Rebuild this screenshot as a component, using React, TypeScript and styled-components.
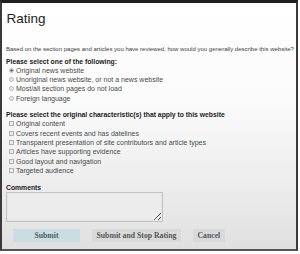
import React, { useState } from 'react';
import styled, { createGlobalStyle } from 'styled-components';

const GlobalStyle = createGlobalStyle`
  html, body {
    margin: 0;
    padding: 0;
    background: #fff;
  }
  * {
    box-sizing: border-box;
  }
`;

const radioOptions = [
  'Original news website',
  'Unoriginal news website, or not a news website',
  'Most/all section pages do not load',
  'Foreign language',
];

const checkOptions = [
  'Original content',
  'Covers recent events and has datelines',
  'Transparent presentation of site contributors and article types',
  'Articles have supporting evidence',
  'Good layout and navigation',
  'Targeted audience',
];

export default function App() {
  const [choice, setChoice] = useState(0);
  const [checked, setChecked] = useState<boolean[]>(checkOptions.map(() => false));

  function toggle(i: number) {
    setChecked(checked.map((c, j) => (j === i ? !c : c)));
  }

  return (
    <>
      <GlobalStyle />
      <Frame>
        <Title>Rating</Title>
        <Intro>
          Based on the section pages and articles you have reviewed, how would you generally describe this
          website?
        </Intro>

        <Heading>Please select one of the following:</Heading>
        <OptionList>
          {radioOptions.map((label, i) => (
            <Option key={label} onClick={() => setChoice(i)}>
              <Radio isActive={choice === i} />
              {label}
            </Option>
          ))}
        </OptionList>

        <Heading spaced>Please select the original characteristic(s) that apply to this website</Heading>
        <OptionList>
          {checkOptions.map((label, i) => (
            <Option key={label} onClick={() => toggle(i)}>
              <Check isActive={checked[i]} />
              {label}
            </Option>
          ))}
        </OptionList>

        <Heading comments>Comments</Heading>
        <CommentBox />

        <ButtonRow>
          <Button primary>Submit</Button>
          <Button>Submit and Stop Rating</Button>
          <Button>Cancel</Button>
        </ButtonRow>
      </Frame>
    </>
  );
}

const Frame = styled.div`
  width: 298px;
  height: 251px;
  border-top: 3px solid #1e1e1e;
  border-left: 2px solid #3a3a3a;
  border-right: 2px solid #3a3a3a;
  border-bottom: 2px solid #555;
  background: linear-gradient(to bottom, #ffffff 0%, #fbfbfb 40%, #ececec 75%, #e0e0e0 100%);
  padding: 8px 0 0 4px;
  display: flex;
  flex-direction: column;
  font-family: 'Liberation Sans', Arial, sans-serif;
  color: #333;
`;

const Title = styled.div`
  font-size: 13.5px;
  line-height: 16px;
  color: #222;
  margin: 0 0 0 0.5px;
`;

const Intro = styled.div`
  font-size: 6px;
  line-height: 7px;
  color: #3c3c3c;
  white-space: nowrap;
  margin-top: 19px;
`;

type HeadingProps = { spaced?: boolean; comments?: boolean };
const Heading = styled.div<HeadingProps>`
  font-size: 6.8px;
  line-height: 9px;
  font-weight: bold;
  color: #222;
  margin-top: ${(p) => (p.spaced ? '7.5px' : p.comments ? '8px' : '3.5px')};
  white-space: nowrap;
`;

const OptionList = styled.div`
  display: flex;
  flex-direction: column;
`;

const Option = styled.label`
  display: flex;
  align-items: center;
  gap: 2px;
  height: 9.3px;
  padding-left: 3px;
  font-size: 7px;
  color: #4a4a4a;
  white-space: nowrap;
  cursor: pointer;
`;

type MarkProps = { isActive: boolean };
const Radio = styled.span<MarkProps>`
  width: 5px;
  height: 5px;
  border-radius: 50%;
  border: 1px solid #b8b8b8;
  background: ${(p) => (p.isActive ? 'radial-gradient(circle, #777 0 1.2px, #e6e6e6 1.4px)' : '#e6e6e6')};
  flex-shrink: 0;
`;

const Check = styled.span<MarkProps>`
  width: 5px;
  height: 5px;
  border: 1px solid #b0b0b0;
  background: ${(p) => (p.isActive ? '#888' : '#eaeaea')};
  flex-shrink: 0;
`;

const CommentBox = styled.textarea`
  width: 157px;
  height: 30px;
  margin-top: 0.5px;
  border: 1px solid #c4c4c4;
  box-shadow: inset 0 0 0 1px #e4e4e4;
  background: #ececec;
  outline: none;
  resize: both;
  padding: 2px;
  font-family: 'Liberation Sans', Arial, sans-serif;
  font-size: 7px;
`;

const ButtonRow = styled.div`
  display: flex;
  gap: 12px;
  margin-top: 7px;
  padding-left: 7px;
`;

type ButtonProps = { primary?: boolean };
const Button = styled.button<ButtonProps>`
  height: 13px;
  min-width: ${(p) => (p.primary ? '67px' : '0')};
  padding: 0 4.5px;
  border: none;
  background: ${(p) => (p.primary ? '#c9dde2' : '#d9d9d9')};
  color: ${(p) => (p.primary ? '#4d5d63' : '#555')};
  font-family: 'Liberation Serif', 'Times New Roman', serif;
  font-weight: bold;
  font-size: 7.75px;
  line-height: 13px;
  cursor: pointer;
`;
